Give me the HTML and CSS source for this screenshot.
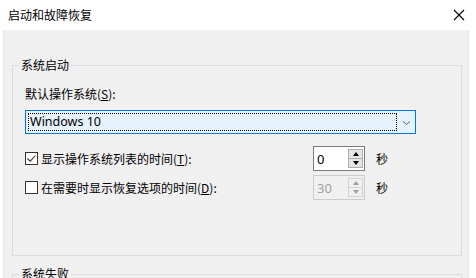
FILE: index.html
```html
<!DOCTYPE html>
<html lang="zh-CN">
<head>
<meta charset="utf-8">
<title>启动和故障恢复</title>
<link rel="stylesheet" href="styles.css">
</head>
<body>
<div class="window">
  <div class="titlebar">
    <span class="title">启动和故障恢复</span>
    <svg class="close" width="12" height="12" viewBox="0 0 12 12"><path d="M1 1 L11 11 M11 1 L1 11" stroke="#000" stroke-width="1.1" fill="none"/></svg>
  </div>
  <div class="panel">
    <fieldset class="group">
      <legend>系统启动</legend>
      <div class="group-body">
        <div class="label">默认操作系统(<u>S</u>):</div>
        <div class="combo">
          <div class="combo-value">Windows 10</div>
          <div class="combo-arrow">
            <svg width="9" height="6" viewBox="0 0 9 6"><path d="M1 1.5 L4.5 4.5 L8 1.5" stroke="#606060" stroke-width="1" fill="none"/></svg>
          </div>
        </div>
        <div class="row first">
          <div class="check">
            <span class="box checked"><svg width="11" height="11" viewBox="0 0 11 11"><path d="M1.5 5.5 L4.2 8.2 L9.5 2.5" stroke="#333" stroke-width="1.1" fill="none"/></svg></span>
            <span>显示操作系统列表的时间(<u>T</u>):</span>
          </div>
          <div class="spin">
            <div class="spin-value">0</div>
            <div class="spin-btns">
              <div class="spin-btn"><span class="tri up"></span></div>
              <div class="spin-btn"><span class="tri down"></span></div>
            </div>
          </div>
          <span class="unit">秒</span>
        </div>
        <div class="row">
          <div class="check">
            <span class="box"></span>
            <span>在需要时显示恢复选项的时间(<u>D</u>):</span>
          </div>
          <div class="spin disabled">
            <div class="spin-value">30</div>
            <div class="spin-btns">
              <div class="spin-btn"><span class="tri up"></span></div>
              <div class="spin-btn"><span class="tri down"></span></div>
            </div>
          </div>
          <span class="unit">秒</span>
        </div>
      </div>
    </fieldset>
    <fieldset class="group second">
      <legend>系统失败</legend>
      <div class="group-body"></div>
    </fieldset>
  </div>
</div>
</body>
</html>
```

FILE: styles.css
```css
html, body {
  margin: 0;
  padding: 0;
  background: #ffffff;
}
body {
  width: 476px;
  height: 278px;
  overflow: hidden;
  font-family: "Noto Sans CJK SC", "Noto Sans", sans-serif;
  font-size: 12px;
  line-height: 16px;
  color: #000;
}
.window {
  display: flex;
  flex-direction: column;
  height: 278px;
}
.titlebar {
  height: 30px;
  flex: none;
  display: flex;
  align-items: center;
  justify-content: space-between;
  padding: 0 11px 1px 8px;
  box-sizing: border-box;
  background: #fff;
}
.close {
  display: block;
}
.panel {
  flex: 1;
  margin-left: 3px;
  width: 466px;
  box-sizing: border-box;
  background: #f0f0f0;
  border-left: 1px solid #e6e6e6;
  border-right: 1px solid #e6e6e6;
  padding: 27px 6px 0 8px;
}
.group {
  margin: 0;
  padding: 0;
  border: 1px solid #dcdcdc;
  min-width: 0;
}
.group legend {
  margin-left: 6px;
  padding: 0 2px;
  line-height: 16px;
}
.group-body {
  padding: 13px 12px 55px 12px;
}
.second {
  margin-top: 10px;
}
.label {
  height: 16px;
}
.combo {
  margin-top: 8px;
  width: 391px;
  height: 24px;
  box-sizing: border-box;
  border: 1px solid #0078d7;
  background: #e5f1fb;
  display: flex;
  align-items: stretch;
}
.combo-value {
  flex: 1;
  margin: 2px 0 2px 2px;
  border: 1px dotted #000;
  font-family: "Noto Sans", sans-serif;
  font-size: 12.5px;
  line-height: 16px;
  padding-left: 1px;
  display: flex;
  align-items: center;
}
.combo-arrow {
  width: 18px;
  display: flex;
  align-items: center;
  justify-content: center;
}
.combo-arrow svg {
  display: block;
  margin-top: 1px;
}
.row {
  display: flex;
  align-items: center;
  height: 25px;
  margin-top: 4px;
}
.row.first {
  margin-top: 12px;
}
.check {
  width: 288px;
  display: flex;
  align-items: center;
}
.box {
  width: 13px;
  height: 13px;
  box-sizing: border-box;
  border: 1px solid #333;
  background: #fff;
  margin-right: 3px;
  display: flex;
  align-items: center;
  justify-content: center;
}
.box svg {
  display: block;
}
.spin {
  width: 52px;
  height: 25px;
  box-sizing: border-box;
  border: 1px solid #7a7a7a;
  background: #fff;
  display: flex;
}
.spin-value {
  flex: 1;
  font-family: "Noto Sans", sans-serif;
  font-size: 13px;
  padding-left: 3px;
  display: flex;
  align-items: center;
}
.spin-btns {
  width: 15px;
  margin: 2px 1px 2px 0;
  display: flex;
  flex-direction: column;
  border: 1px solid #adadad;
  box-sizing: border-box;
}
.spin-btn {
  flex: 1;
  background: #e5e5e5;
  display: flex;
  align-items: center;
  justify-content: center;
}
.spin-btn + .spin-btn {
  border-top: 1px solid #adadad;
}
.tri {
  width: 0;
  height: 0;
  border-left: 3.5px solid transparent;
  border-right: 3.5px solid transparent;
}
.tri.up {
  border-bottom: 4px solid #000;
}
.tri.down {
  border-top: 4px solid #000;
}
.spin.disabled {
  border-color: #cccccc;
  background: #f0f0f0;
  color: #a0a0a0;
}
.spin.disabled .spin-btns {
  border-color: #d4d4d4;
}
.spin.disabled .spin-btn {
  background: #f0f0f0;
}
.spin.disabled .spin-btn + .spin-btn {
  border-top-color: #d4d4d4;
}
.spin.disabled .tri.up {
  border-bottom-color: #a0a0a0;
}
.spin.disabled .tri.down {
  border-top-color: #a0a0a0;
}
.unit {
  margin-left: 11px;
}
u {
  text-decoration: underline;
  text-underline-offset: 1px;
}
```
